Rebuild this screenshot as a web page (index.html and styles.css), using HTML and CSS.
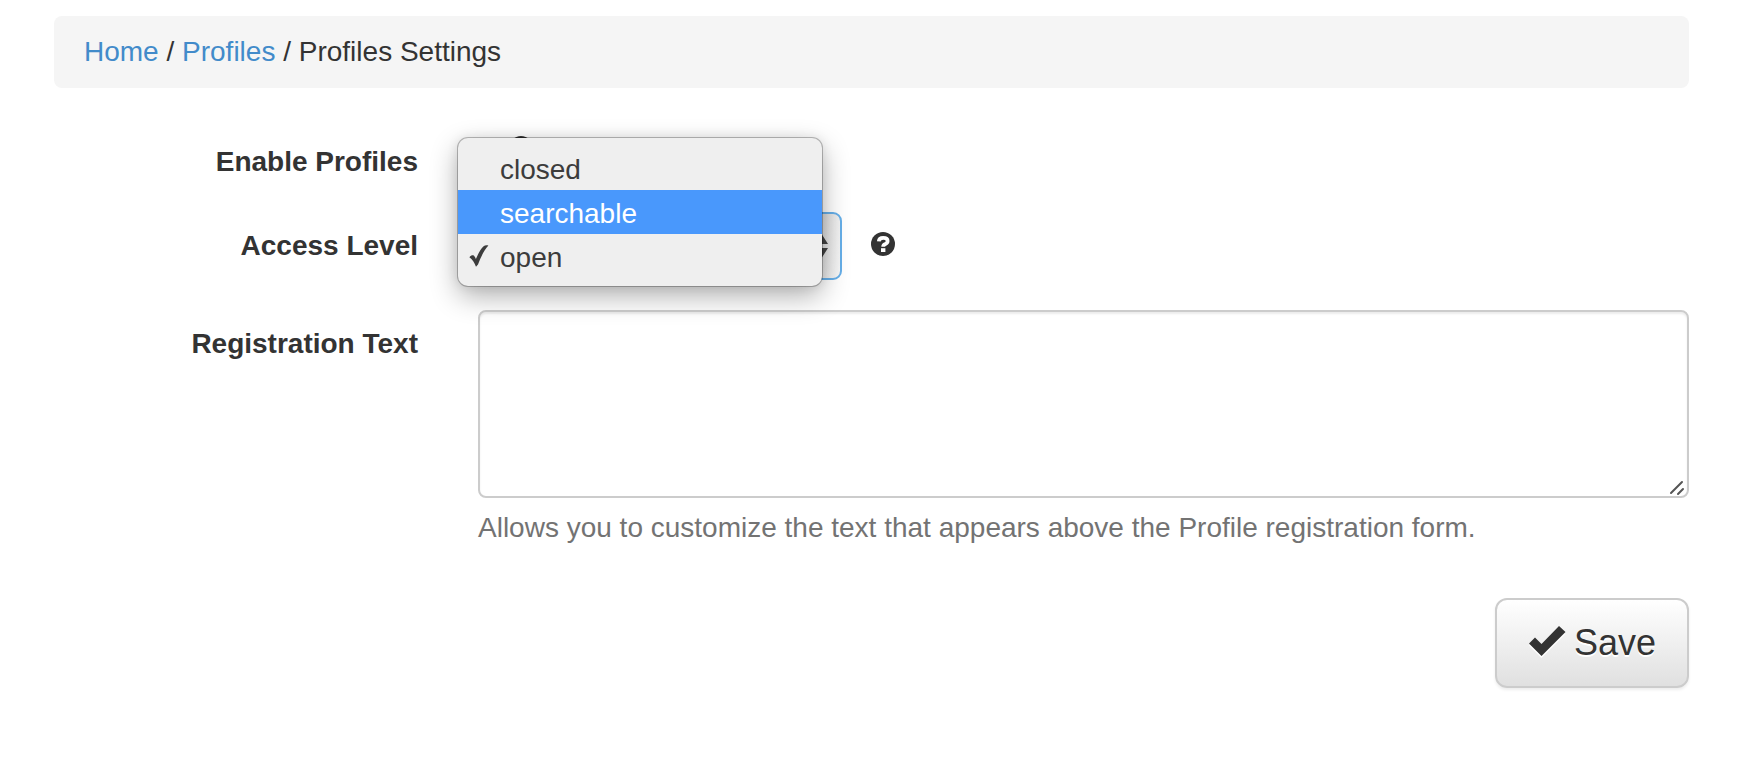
FILE: index.html
```html
<!DOCTYPE html>
<html lang="en">
<head>
<meta charset="utf-8">
<title>Profiles Settings</title>
<link rel="stylesheet" href="styles.css">
</head>
<body>
<main class="page">
  <nav class="breadcrumb" aria-label="Breadcrumb">
    <a href="#">Home</a> / <a href="#">Profiles</a> / <span>Profiles Settings</span>
  </nav>

  <form class="settings">
    <label class="label" for="enable">Enable Profiles</label>
    <div class="field field-check">
      <input class="check" type="checkbox" id="enable" checked>
      <svg class="help" viewBox="0 0 24 24" aria-hidden="true"><circle cx="12" cy="12" r="12" fill="#333"/></svg>
    </div>

    <label class="label" for="access">Access Level</label>
    <div class="field field-select">
      <div class="select-wrap">
        <select class="select" id="access">
          <option>closed</option>
          <option>searchable</option>
          <option selected>open</option>
        </select>
        <svg class="arrows" viewBox="0 0 16 24" aria-hidden="true"><path d="M2 10 9 -1 16 10ZM2 14h14L9 25Z" fill="#444"/></svg>
        <div class="menu">
          <button class="item" type="button">closed</button>
          <button class="item item-active" type="button">searchable</button>
          <button class="item" type="button">
            <svg class="tick" viewBox="0 0 20 22" aria-hidden="true"><path d="M.4 12.200C2 10.400 3.800 9.800 5 10.800c.9.800 1.400 2 1.900 3.300C9.200 8.400 11.800 4 14.600 1.300 15.800.3 17.600.1 19.400.6 15 5.500 11.400 12.700 9 19.500L7 21.800C5.500 18 3.800 14.500.4 12.200Z" fill="#3c3c3c"/></svg>open</button>
        </div>
      </div>
      <svg class="help" viewBox="0 0 24 24" role="img" aria-label="Help"><circle cx="12" cy="12" r="12" fill="#333"/><path d="M7.800 9.300C8 6.900 9.500 5.800 12.200 5.800c2.800 0 4.400 1.300 4.400 3.200 0 1.600-.9 2.400-2.200 3-1.200.5-2.200 1-2.200 2.800" fill="none" stroke="#fff" stroke-width="3.800"/><path d="M10 16.200h4.400v3.800H10z" fill="#fff"/></svg>
    </div>

    <label class="label" for="regtext">Registration Text</label>
    <div class="field">
      <div class="textarea-wrap">
        <textarea class="textarea" id="regtext" aria-describedby="hint"></textarea>
        <svg class="grip" viewBox="0 0 16 16" aria-hidden="true"><path d="M2 13 13 2M9 14l5-5" stroke="#555" stroke-width="2" stroke-linecap="round"/></svg>
      </div>
      <p class="hint" id="hint">Allows you to customize the text that appears above the Profile registration form.</p>
    </div>

    <div class="actions">
      <button class="save" type="submit">
        <svg class="save-icon" viewBox="0 0 38 32" aria-hidden="true"><path d="M1 18.500 7 12.500l6.500 6.500L31 1l6.500 6L13.500 31Z" fill="#333"/></svg>
        <span>Save</span>
      </button>
    </div>
  </form>
</main>
</body>
</html>
```

FILE: styles.css
```css
* {
  box-sizing: border-box;
}

body {
  margin: 0;
  background: #fff;
  color: #333;
  font: 28px/40px "Liberation Sans", Arial, sans-serif;
}

.page {
  padding: 16px 67px 40px 54px;
}

.breadcrumb {
  padding: 16px 30px;
  border-radius: 8px;
  background: #f5f5f5;
}

.breadcrumb a {
  color: #428bca;
  text-decoration: none;
}

.settings {
  display: grid;
  grid-template-columns: 364px 1fr;
  gap: 30px 60px;
  margin-top: 40px;
}

.label {
  padding-top: 14px;
  font-weight: bold;
  text-align: right;
}

.field-check,
.field-select {
  display: flex;
}

.field-check {
  gap: 7px;
  align-items: flex-start;
  padding-top: 8px;
}

.check {
  width: 24px;
  height: 24px;
  margin: 8px 0 0;
}

.help {
  width: 24px;
  height: 24px;
}

.field-select {
  gap: 29px;
  align-items: flex-start;
}

.field-select > .help {
  margin-top: 20px;
}

.select-wrap {
  position: relative;
  width: 364px;
}

.select {
  display: block;
  width: 100%;
  height: 68px;
  padding: 0 40px 0 16px;
  border: 2px solid #66afe9;
  border-radius: 9px;
  outline: none;
  appearance: none;
  background: linear-gradient(90deg, transparent 94%, #ffffffb0), linear-gradient(#d6d6d6, #e8e8e8);
  color: #333;
  font: inherit;
}

.arrows {
  position: absolute;
  right: 14px;
  top: 22px;
  width: 16px;
  height: 24px;
  overflow: visible;
}

.menu {
  position: absolute;
  z-index: 2;
  left: -20px;
  top: -74px;
  width: 100%;
  padding: 8px 0;
  border-radius: 10px;
  background: #efefef;
  box-shadow: 0 0 0 1px #00000040, 0 10px 28px #00000050, 0 0 12px #00000018;
}

.item {
  display: block;
  position: relative;
  width: 100%;
  height: 44px;
  padding: 4px 42px 0;
  border: 0;
  background: none;
  color: #3c3c3c;
  font: inherit;
  text-align: left;
}

.item-active {
  background: #4998fc;
  color: #fff;
}

.tick {
  position: absolute;
  left: 11px;
  top: 11px;
  width: 20px;
  height: 22px;
}

.textarea-wrap {
  position: relative;
}

.textarea {
  display: block;
  width: 100%;
  height: 188px;
  padding: 10px 16px;
  border: 2px solid #ccc;
  border-radius: 8px;
  resize: none;
  background: #fff;
  box-shadow: inset 0 2px 2px #00000013;
  color: #555;
  font: inherit;
}

.grip {
  position: absolute;
  right: 4px;
  bottom: 2px;
  width: 16px;
  height: 16px;
  pointer-events: none;
}

.hint {
  margin: 10px 0 0;
  color: #737373;
}

.actions {
  display: flex;
  grid-column: 1 / -1;
  justify-content: flex-end;
  margin-top: 20px;
}

.save {
  display: flex;
  gap: 8px;
  align-items: center;
  height: 90px;
  padding: 0 31px;
  border: 2px solid #ccc;
  border-radius: 12px;
  background: linear-gradient(#fff, #e0e0e0);
  box-shadow: 0 2px 3px #00000013;
  color: #333;
  font: 36px/48px "Liberation Sans", Arial, sans-serif;
  text-shadow: 0 2px 0 #fff;
}

.save-icon {
  width: 38px;
  height: 32px;
  margin-bottom: 4px;
  filter: drop-shadow(0 2px 0 #fff);
}
```
